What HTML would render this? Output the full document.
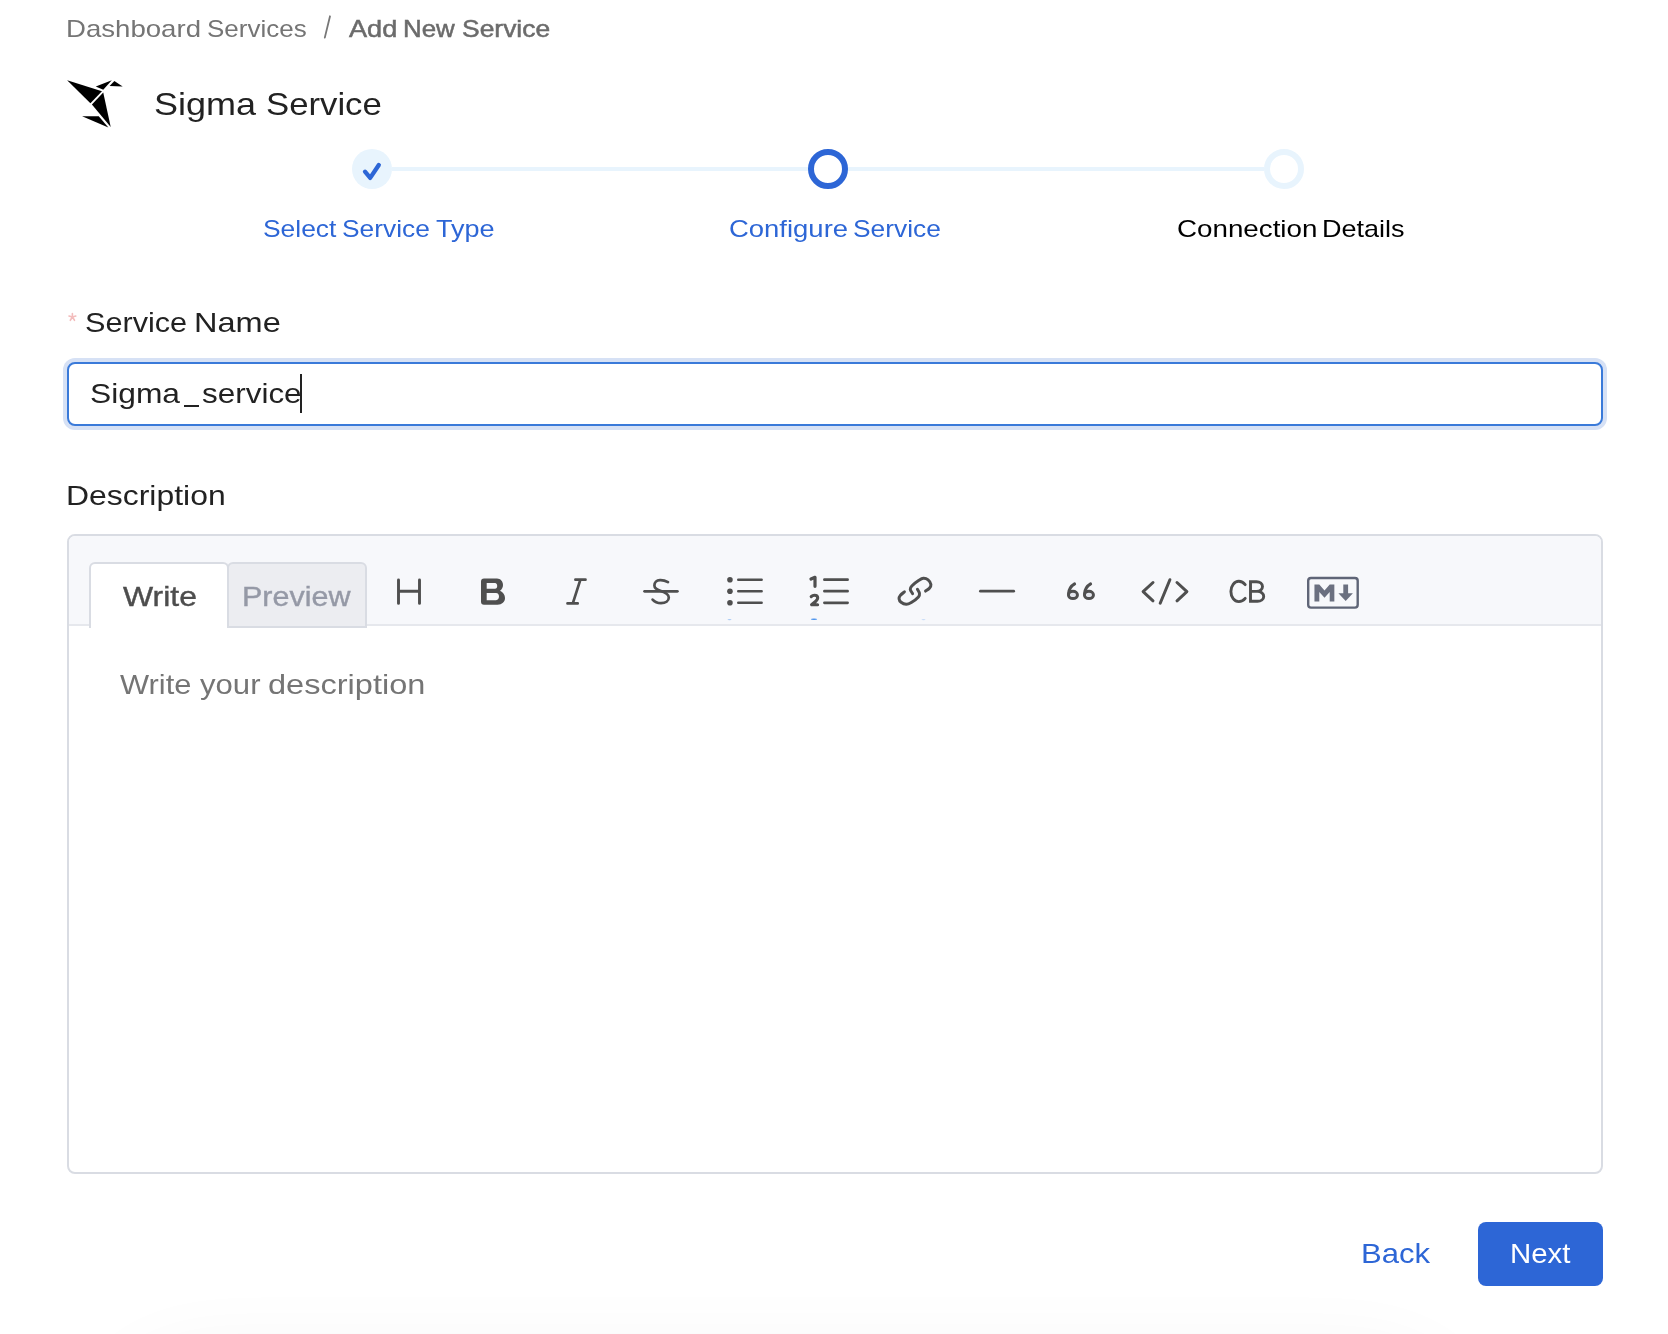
<!DOCTYPE html>
<html>
<head>
<meta charset="utf-8">
<style>
html,body{margin:0;padding:0;background:#fff;}
body{width:1668px;height:1334px;position:relative;overflow:hidden;font-family:"Liberation Sans",sans-serif;}
.t{position:absolute;white-space:nowrap;line-height:1;transform-origin:0 0;will-change:transform;-webkit-font-smoothing:antialiased;}
.abs{position:absolute;box-sizing:border-box;}
</style>
</head>
<body>

<!-- breadcrumb -->
<div class="t" id="bc1_0" style="left:66.12px;top:17.20px;font-size:24px;color:#757575;transform:scaleX(1.1497);">Dashboard</div>
<div class="t" id="bc1_1" style="left:207.35px;top:17.20px;font-size:24px;color:#757575;transform:scaleX(1.0825);">Services</div>
<svg class="abs" style="left:0;top:0" width="400" height="60"><path d="M330 16.25 L324.8 37.65" stroke="#777" stroke-width="1.8" stroke-linecap="round"/></svg>
<div class="t" id="bc2_0" style="left:349.18px;top:17.20px;font-size:24px;color:#6b6b6b;-webkit-text-stroke:0.5px #6b6b6b;transform:scaleX(1.1299);">Add</div>
<div class="t" id="bc2_1" style="left:403.41px;top:17.20px;font-size:24px;color:#6b6b6b;-webkit-text-stroke:0.5px #6b6b6b;transform:scaleX(1.0782);">New</div>
<div class="t" id="bc2_2" style="left:462.38px;top:17.20px;font-size:24px;color:#6b6b6b;-webkit-text-stroke:0.5px #6b6b6b;transform:scaleX(1.1013);">Service</div>

<!-- logo -->
<svg class="abs" style="left:0;top:0" width="1668" height="1334" viewBox="0 0 1668 1334">
  <g fill="#000">
    <polygon points="67.13,80.13 101.96,91.24 90.42,103.21"/>
    <polygon points="95.76,86.54 111.79,80.34 103.24,89.74"/>
    <polygon points="114.35,80.98 122.68,86.54 109.65,85.90"/>
    <polygon points="103.24,92.52 110.72,126.92 91.91,104.49"/>
    <polygon points="82.09,116.24 98.75,116.24 108.37,127.56"/>
  </g>
  <!-- stepper -->
  <rect x="392" y="167" width="416" height="4" fill="#E8F4FD"/>
  <rect x="848" y="167" width="416" height="4" fill="#E8F4FD"/>
  <circle cx="372" cy="169" r="20" fill="#E8F4FD"/>
  <path d="M365 171.7 L370.2 177.9 L378.8 165" fill="none" stroke="#2D66D6" stroke-width="4.3" stroke-linecap="round" stroke-linejoin="round"/>
  <circle cx="828" cy="169" r="17" fill="#fff" stroke="#2D66D6" stroke-width="6"/>
  <circle cx="1284" cy="169" r="17" fill="#fff" stroke="#E8F4FD" stroke-width="6"/>
</svg>

<div class="t" id="title_0" style="left:154.26px;top:88.10px;font-size:32px;color:#222;transform:scaleX(1.1252);">Sigma</div>
<div class="t" id="title_1" style="left:265.64px;top:88.10px;font-size:32px;color:#222;transform:scaleX(1.0849);">Service</div>

<div class="t" id="s1_0" style="left:262.68px;top:217.10px;font-size:24px;color:#2D66D6;transform:scaleX(1.1006);">Select</div>
<div class="t" id="s1_1" style="left:342.21px;top:217.10px;font-size:24px;color:#2D66D6;transform:scaleX(1.0970);">Service</div>
<div class="t" id="s1_2" style="left:435.68px;top:217.10px;font-size:24px;color:#2D66D6;transform:scaleX(1.1263);">Type</div>
<div class="t" id="s2_0" style="left:728.97px;top:217.10px;font-size:24px;color:#2D66D6;transform:scaleX(1.1439);">Configure</div>
<div class="t" id="s2_1" style="left:853.02px;top:217.10px;font-size:24px;color:#2D66D6;transform:scaleX(1.0977);">Service</div>
<div class="t" id="s3_0" style="left:1177.08px;top:217.10px;font-size:24px;color:#000;transform:scaleX(1.1563);">Connection</div>
<div class="t" id="s3_1" style="left:1321.89px;top:217.10px;font-size:24px;color:#000;transform:scaleX(1.1248);">Details</div>

<!-- service name -->
<svg class="abs" style="left:0;top:280px" width="100" height="60"><g transform="translate(0,-280)" stroke="#F3BDBD" stroke-width="1.6" stroke-linecap="round"><path d="M72.4 317 L72.4 313.6 M72.4 317 L75.8 316 M72.4 317 L74.5 320.3 M72.4 317 L70.3 320.3 M72.4 317 L69 316"/></g></svg>
<div class="t" id="lbl1_0" style="left:85.12px;top:308.90px;font-size:28px;color:#222;transform:scaleX(1.0936);">Service</div>
<div class="t" id="lbl1_1" style="left:193.67px;top:308.90px;font-size:28px;color:#222;transform:scaleX(1.1612);">Name</div>

<div class="abs" style="left:63px;top:358px;width:1544px;height:72px;border-radius:12px;background:#D6E1F5;"></div>
<div class="abs" style="left:67px;top:362px;width:1536px;height:64px;border-radius:8px;border:2px solid #3A7AD9;background:#fff;"></div>
<div class="t" id="inp_0" style="left:90.43px;top:380.00px;font-size:28px;color:#222;transform:scaleX(1.1336);">Sigma</div>
<div class="abs" style="left:184.2px;top:404.6px;width:15px;height:2.2px;background:#222;"></div>
<div class="t" id="inp_2" style="left:202.30px;top:380.00px;font-size:28px;color:#222;transform:scaleX(1.1230);">service</div>
<div class="abs" id="cursor" style="left:300px;top:374px;width:2px;height:39px;background:#222;"></div>

<!-- description -->
<div class="t" id="lbl2" style="left:65.70px;top:481.90px;font-size:28px;color:#222;transform:scaleX(1.1399);">Description</div>

<div class="abs" style="left:67px;top:534px;width:1536px;height:640px;border:2px solid #D9DCE3;border-radius:8px;background:#fff;overflow:hidden;">
  <div class="abs" style="left:0;top:0;width:1532px;height:90px;background:#F7F8FB;border-bottom:2px solid #E6E8ED;"></div>
</div>
<div class="abs" style="left:227px;top:562px;width:140px;height:66px;background:#ECEDF1;border:2px solid #D9DCE3;border-radius:6px 6px 0 0;"></div>
<div class="abs" style="left:89px;top:562px;width:140px;height:66px;background:#fff;border:2px solid #D9DCE3;border-bottom:none;border-radius:6px 6px 0 0;"></div>
<div class="t" id="write" style="left:122.70px;top:583.20px;font-size:28px;color:#4d4d4d;-webkit-text-stroke:0.4px #4d4d4d;transform:scaleX(1.1398);">Write</div>
<div class="t" id="preview" style="left:242.04px;top:582.90px;font-size:28px;color:#9599A6;-webkit-text-stroke:0.4px #9599A6;transform:scaleX(1.0886);">Preview</div>

<div class="t" id="ph_0" style="left:120.31px;top:671.00px;font-size:28px;color:#757575;transform:scaleX(1.1012);">Write</div>
<div class="t" id="ph_1" style="left:200.00px;top:671.00px;font-size:28px;color:#757575;transform:scaleX(1.1108);">your</div>
<div class="t" id="ph_2" style="left:268.39px;top:671.00px;font-size:28px;color:#757575;transform:scaleX(1.1624);">description</div>


<!-- toolbar icons -->
<svg class="abs" style="left:0;top:0" width="1668" height="1334" viewBox="0 0 1668 1334">
 <g fill="none" stroke="#4f4f4f" stroke-linecap="round" stroke-linejoin="round">
  <!-- H -->
  <path d="M398.5 580 V603.4 M419.5 580 V603.4 M398.5 591.2 H419.5" stroke-width="2.9"/>
  <!-- I -->
  <path d="M575.4 579.7 H585.5 M567.5 603.4 H577.7 M580.4 579.7 L572.8 603.4" stroke-width="2.7"/>
  <!-- S strike -->
  <path d="M644.5 591.3 H677.4" stroke-width="2.7"/>
  <path d="M668 582.2 C665 580.5 662 580 660 580.1 C656.5 580.2 654.4 582.5 654.4 585.5 C654.4 588.5 657 589.8 661 591 C665.5 592.5 668.8 594 668.8 597.5 C668.8 601 665.5 603.2 661 603.2 C657.5 603.2 654.5 601.8 652.6 599.6" stroke-width="2.7"/>
  <!-- bullet list lines -->
  <path d="M738.3 579.8 H761.6 M738.3 591.2 H761.6 M738.3 602.7 H761.6" stroke-width="2.6"/>
  <!-- ordered list lines -->
  <path d="M824.4 579.7 H847.6 M824.4 591.2 H847.6 M824.4 602.8 H847.6" stroke-width="2.7"/>
  <path d="M811 579 L815 577.3 V586.3" stroke-width="3.2"/>
  <path d="M811.2 596.6 C812 595.8 813.1 595.3 814.4 595.3 C816.3 595.3 817.7 596.5 817.7 598.1 C817.7 599.3 817 600.2 815.8 601.2 L811.6 604.8 H817.6" stroke-width="3.1"/>
  <!-- link -->
  <path d="M912.56 593.62 C912.18 592.90 910.40 590.56 910.27 589.29 C910.14 588.02 910.36 587.46 911.80 585.98 C913.24 584.49 917.00 581.65 918.94 580.37 C920.87 579.10 921.87 578.42 923.40 578.33 C924.92 578.25 926.86 578.84 928.11 579.86 C929.36 580.88 930.70 583.05 930.91 584.45 C931.13 585.85 930.28 587.17 929.38 588.27 C928.49 589.38 926.20 590.61 925.56 591.07" stroke-width="3"/>
  <path d="M904.41 591.84 C903.73 592.43 901.22 594.26 900.33 595.41 C899.44 596.55 898.93 597.57 899.06 598.72 C899.19 599.87 899.91 601.35 901.10 602.29 C902.29 603.22 904.49 604.28 906.19 604.33 C907.89 604.37 909.25 603.77 911.29 602.54 C913.33 601.31 917.07 598.46 918.43 596.94 C919.79 595.41 919.62 594.64 919.45 593.37 C919.28 592.09 917.75 589.97 917.41 589.29" stroke-width="3"/>
  <!-- hr -->
  <path d="M980.4 591.2 H1013.7" stroke-width="2.7"/>
  <!-- quote -->
  <ellipse cx="1072.95" cy="594.95" rx="4.5" ry="3.6" fill="#E3E5EC" stroke-width="3"/>
  <path d="M1068.6 593.5 C1069 589 1071 586 1074.6 583.9" stroke-width="3"/>
  <ellipse cx="1088.95" cy="594.95" rx="4.5" ry="3.6" fill="#E3E5EC" stroke-width="3"/>
  <path d="M1084.6 593.5 C1085 589 1087 586 1090.6 583.9" stroke-width="3"/>
  <!-- code -->
  <path d="M1153 582.5 L1143.1 591.6 L1153 600.8 M1169.9 579.7 L1160.2 603.2 M1177 582.5 L1186.9 591.6 L1177 600.8" stroke-width="3"/>
  <!-- CB -->
  <path d="M1245.2 584.6 C1243.5 582.5 1241.2 581.3 1238.8 581.3 C1234.3 581.3 1230.9 585.9 1230.9 591.5 C1230.9 597.1 1234.3 601.6 1238.8 601.6 C1241.2 601.6 1243.5 600.5 1245.2 598.4" stroke-width="2.9"/>
  <path d="M1250.5 591.4 H1256.5 C1260 591.4 1262.5 589.3 1262.5 586.6 C1262.5 583.9 1260 581.7 1256.5 581.7 H1250.5 V601.3 H1257.5 C1261 601.3 1263.7 599.1 1263.7 596.4 C1263.7 593.8 1261 591.4 1257.5 591.4 H1250.5" stroke-width="2.9" stroke-linecap="butt" stroke-linejoin="miter"/>
 </g>
 <g fill="#4f4f4f">
  <!-- B -->
  <path fill-rule="evenodd" d="M481 581.6 Q481 578.6 484 578.6 H497 C500.5 578.6 503 581.5 503 585 C503 587.5 501.8 589.5 500 590.8 C503 592 505 595 505 598 C505 601.8 502 604.7 497.5 604.7 H484 Q481 604.7 481 601.7 Z M486.7 583.1 H495 C496.5 583.1 497.2 584.5 497.2 586 C497.2 587.5 496.5 588.8 495 588.8 H486.7 Z M486.7 593 H496 C498 593 499 594.8 499 596.6 C499 598.4 498 600.3 496 600.3 H486.7 Z"/>
  <circle cx="729.95" cy="579.8" r="2.8"/>
  <circle cx="729.95" cy="591.2" r="2.8"/>
  <circle cx="729.95" cy="602.7" r="2.8"/>
 </g>
 <!-- MD -->
 <rect x="1308.2" y="578" width="49.5" height="29.6" rx="2.8" fill="none" stroke="#5F6577" stroke-width="2.4"/>
 <polygon fill="#6B7080" points="1314.45,584.45 1319.3,584.45 1324.5,590.6 1329.7,584.45 1334.35,584.45 1334.35,601.4 1329.7,601.4 1329.7,592.1 1324.5,597.65 1319.3,592.1 1319.3,601.4 1314.45,601.4"/>
 <polygon fill="#6B7080" points="1343.3,584.45 1348.1,584.45 1348.1,593.2 1352.9,593.2 1345.7,601 1338.4,593.2 1343.3,593.2"/>
 <!-- tiny blue marks -->
 <ellipse cx="814" cy="619.3" rx="3.2" ry="0.75" fill="#4A93EE"/>
 <ellipse cx="729.5" cy="619.6" rx="2" ry="0.6" fill="#A9CBF5"/>
 <ellipse cx="923.5" cy="619.6" rx="2" ry="0.6" fill="#C9DDF7"/>
</svg>

<div class="abs" style="left:110px;top:1365px;width:1350px;height:200px;border-radius:100px;background:#fff;box-shadow:0 0 80px 12px rgba(0,0,0,0.05);"></div>
<!-- buttons -->
<div class="t" id="back" style="left:1361.43px;top:1240.00px;font-size:28px;color:#2D66D6;transform:scaleX(1.1098);">Back</div>
<div class="abs" style="left:1478px;top:1222px;width:125px;height:64px;border-radius:8px;background:#2D66D6;"></div>
<div class="t" id="next" style="left:1509.79px;top:1240.00px;font-size:28px;color:#fff;transform:scaleX(1.0499);">Next</div>

</body>
</html>
